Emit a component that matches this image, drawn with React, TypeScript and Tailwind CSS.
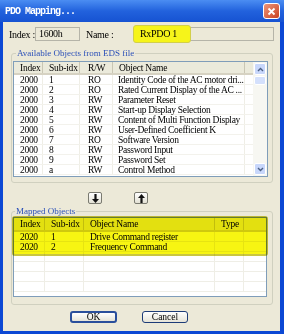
import React from "react";

const available = [
  ["2000", "1", "RO", "Identity Code of the AC motor dri..."],
  ["2000", "2", "RO", "Rated Current Display of the AC ..."],
  ["2000", "3", "RW", "Parameter Reset"],
  ["2000", "4", "RW", "Start-up Display Selection"],
  ["2000", "5", "RW", "Content of Multi Function Display"],
  ["2000", "6", "RW", "User-Defined Coefficient K"],
  ["2000", "7", "RO", "Software Version"],
  ["2000", "8", "RW", "Password Input"],
  ["2000", "9", "RW", "Password Set"],
  ["2000", "a", "RW", "Control Method"],
];

const mapped = [
  ["2020", "1", "Drive Command register", ""],
  ["2020", "2", "Frequency Command", ""],
  ["", "", "", ""],
  ["", "", "", ""],
  ["", "", "", ""],
  ["", "", "", ""],
];

const Chevron = ({ up }: { up?: boolean }) => (
  <svg width="7" height="5" viewBox="0 0 7 5">
    <path d={up ? "M1 4 L3.5 1.5 L6 4" : "M1 1 L3.5 3.5 L6 1"} stroke="#4d6185" strokeWidth="1.4" fill="none" />
  </svg>
);

const Arrow = ({ up }: { up?: boolean }) => (
  <svg width="7" height="9" viewBox="0 0 7 9">
    {up ? (
      <path d="M3.5 0 L7 4 L4.6 4 L4.6 9 L2.4 9 L2.4 4 L0 4 Z" fill="#111" />
    ) : (
      <path d="M2.4 0 L4.6 0 L4.6 5 L7 5 L3.5 9 L0 5 L2.4 5 Z" fill="#111" />
    )}
  </svg>
);

const cell = "h-full border-r border-[#efeee6] pl-[6px] whitespace-nowrap overflow-hidden";
const head = "h-full border-r border-[#c9c6b4] pl-[6px] whitespace-nowrap overflow-hidden";

const AvailableTable = () => {
  return (
    <div className="h-[116px] flex border border-[#7f9db9] bg-white">
      <div className="flex-1 flex flex-col overflow-hidden">
        <div className="h-[13px] flex bg-[#ebeadb] border-b-2 border-[#d6d2c2] text-[9.5px] leading-[12px] tracking-[-0.2px]">
          <div className={head + " w-[29px]"}>Index</div>
          <div className={head + " w-[37px]"}>Sub-idx</div>
          <div className={head + " w-[33px] pl-[8px]"}>R/W</div>
          <div className={head + " w-[132px] pl-[5px]"}>Object Name</div>
          <div className="flex-1" />
        </div>
        {available.map((r) => (
          <div key={r[1]} className="h-[10px] shrink-0 flex border-b border-[#f3f2ec] text-[9.5px] leading-[10px] tracking-[-0.3px]">
            <div className={cell + " w-[29px]"}>{r[0]}</div>
            <div className={cell + " w-[37px]"}>{r[1]}</div>
            <div className={cell + " w-[33px] pl-[8px]"}>{r[2]}</div>
            <div className="h-full w-[132px] pl-[5px] whitespace-nowrap border-r border-[#efeee6]">{r[3]}</div>
            <div className="flex-1" />
          </div>
        ))}
      </div>
      <div className="w-[14px] flex flex-col bg-[#f7f7f2]">
        <div className="h-[12px] m-[1px] rounded-[2px] bg-[#c8d7fb] border border-white flex items-center justify-center">
          <Chevron up />
        </div>
        <div className="h-[9px] mx-[1px] rounded-[2px] bg-[#d4e0fc] border border-white" />
        <div className="flex-1" />
        <div className="h-[12px] m-[1px] rounded-[2px] bg-[#c8d7fb] border border-white flex items-center justify-center">
          <Chevron />
        </div>
      </div>
    </div>
  );
};

const MappedTable = () => {
  return (
    <div className="h-[80px] flex flex-col border border-[#7f9db9] bg-white overflow-hidden">
      <div className="h-[14px] shrink-0 flex bg-[#ebeadb] border-b-2 border-[#d6d2c2] text-[9.5px] leading-[13px] tracking-[-0.2px]">
        <div className={head + " w-[31px]"}>Index</div>
        <div className={head + " w-[39px]"}>Sub-idx</div>
        <div className={head + " w-[131px] pl-[5px]"}>Object Name</div>
        <div className={head + " w-[29px] pl-[4px]"}>Type</div>
        <div className="flex-1" />
      </div>
      {mapped.map((r, i) => (
        <div key={i} className="h-[10px] shrink-0 flex border-b border-[#efeee6] text-[9.5px] leading-[10px] tracking-[-0.3px]">
          <div className={cell + " w-[31px]"}>{r[0]}</div>
          <div className={cell + " w-[39px]"}>{r[1]}</div>
          <div className={cell + " w-[131px] pl-[5px]"}>{r[2]}</div>
          <div className={cell + " w-[29px]"}>{r[3]}</div>
          <div className="flex-1" />
        </div>
      ))}
    </div>
  );
};

export default function App() {
  return (
    <div className="w-[284px] h-[334px] flex flex-col bg-[#0c48d4] font-['Liberation_Serif',serif] text-black overflow-hidden">
      <div className="h-[22px] shrink-0 flex items-center justify-between bg-gradient-to-b from-[#4b8df2] via-[#2262dd] to-[#1652d2] pl-[5px] pr-[4px]">
        <span className="font-['Liberation_Mono',monospace] font-bold text-[10px] tracking-[-1px] text-white">PDO Mapping...</span>
        <div className="w-[17px] h-[16px] rounded-[3px] border border-white bg-gradient-to-br from-[#ec9478] to-[#c9401c] flex items-center justify-center">
          <svg width="9" height="9" viewBox="0 0 9 9">
            <path d="M1.5 1.5 L7.5 7.5 M7.5 1.5 L1.5 7.5" stroke="white" strokeWidth="1.8" />
          </svg>
        </div>
      </div>

      <div className="flex-1 ml-[3px] mr-[4px] mb-[3px] bg-[#ece9d8] flex flex-col">
        <div className="mt-[5px] h-[14px] flex items-center pl-[6px] pr-[6px] text-[10px] tracking-[-0.3px]">
          <span className="w-[26px]">Index :</span>
          <div className="w-[45px] h-[14px] border border-[#b5b4a8] pl-[3px] leading-[12px]">1600h</div>
          <span className="ml-[6px] w-[49px]">Name :</span>
          <div className="flex-1 h-[14px] relative border border-[#b5b4a8] leading-[12px]">
            <div className="absolute -left-[3px] -top-[3px] w-[58px] h-[18px] rounded-[3px] bg-[#f6f41a] border border-[#d2cf4a]" />
            <span className="relative pl-[4px]">RxPDO 1</span>
          </div>
        </div>

        <div className="relative mt-[12px] ml-[8px] mr-[7px] h-[130px] border border-[#d0d0bf] rounded-[3px] pt-[7px] pl-[1px] pr-[4px]">
          <span className="absolute left-[4px] -top-[6px] px-[1px] bg-[#ece9d8] text-[9px] leading-[10px] text-[#2a4fb8]">Available Objects from EDS file</span>
          <AvailableTable />
        </div>

        <div className="mt-[9px] h-[12px] flex gap-[32px] pl-[85px]">
          <div className="w-[14px] h-[12px] rounded-[2px] border border-[#7a7a70] bg-gradient-to-b from-white to-[#e3e1d4] flex items-center justify-center">
            <Arrow />
          </div>
          <div className="w-[14px] h-[12px] rounded-[2px] border border-[#7a7a70] bg-gradient-to-b from-white to-[#e3e1d4] flex items-center justify-center">
            <Arrow up />
          </div>
        </div>

        <div className="relative mt-[7px] ml-[8px] mr-[7px] h-[94px] border border-[#d0d0bf] rounded-[3px] pt-[5px] pl-[1px] pr-[5px]">
          <span className="absolute left-[3px] -top-[6px] px-[1px] bg-[#ece9d8] text-[9px] leading-[10px] text-[#2a4fb8]">Mapped Objects</span>
          <MappedTable />
          <div className="absolute left-0 top-[4px] w-[256px] h-[40px] rounded-[3px] bg-[#f7f512] border-2 border-[#c9c640] mix-blend-multiply" />
        </div>

        <div className="mt-[6px] h-[12px] flex gap-[25px] pl-[67px] text-[9.5px] leading-[9px]">
          <div className="w-[47px] h-[12px] rounded-[3px] border-2 border-[#2a4f9c] bg-gradient-to-b from-white to-[#e6e4d8] flex items-center justify-center">OK</div>
          <div className="w-[46px] h-[12px] rounded-[3px] border border-[#1d3c78] bg-gradient-to-b from-white to-[#e6e4d8] flex items-center justify-center">Cancel</div>
        </div>
      </div>
    </div>
  );
}
